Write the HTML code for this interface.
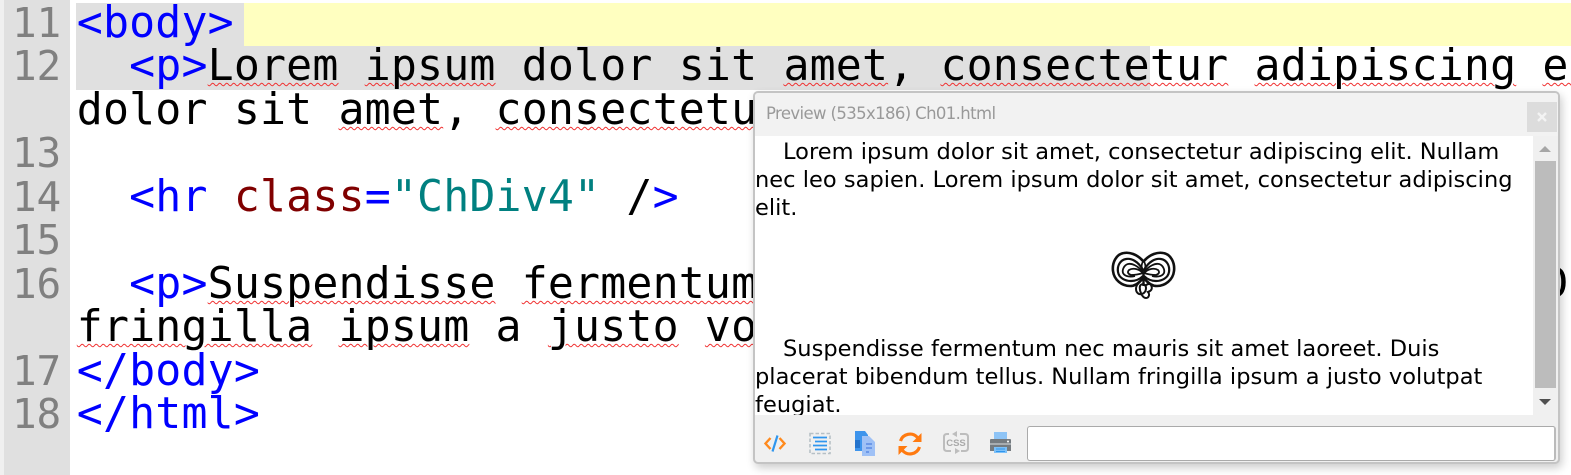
<!DOCTYPE html>
<html><head><meta charset="utf-8">
<style>
html,body{margin:0;padding:0;background:#fff}
#r{position:relative;width:1571px;height:475px;overflow:hidden;background:#fff}
.g{position:absolute}
.l{position:absolute;left:76.8px;font:43.2px/44px "DejaVu Sans Mono",monospace;white-space:pre;color:#000;letter-spacing:.17px}
.n{position:absolute;left:12px;font:41px/44px "DejaVu Sans Mono",monospace;color:#808080;white-space:pre;letter-spacing:-.2px}
.t{color:#00f}.a{color:#800000}.v{color:#008080}
u{text-decoration:underline wavy #f03030 1px;text-underline-offset:2px}
.p{position:absolute;left:755px;font:22.5px/28px "DejaVu Sans",sans-serif;color:#000;white-space:pre;letter-spacing:.03px}
</style></head><body><div id="r">
<div class="g" style="left:0;top:0;width:4px;height:475px;background:#f0f0f0"></div>
<div class="g" style="left:4px;top:0;width:66px;height:475px;background:#e0e0e0"></div>
<div class="g" style="left:76px;top:3px;width:168px;height:43px;background:#e0e0e0"></div>
<div class="g" style="left:244px;top:3px;width:1327px;height:43px;background:#ffffc0"></div>
<div class="g" style="left:76px;top:46px;width:1074px;height:44px;background:#e0e0e0"></div>
<div class="n" style="top:1px">11</div>
<div class="n" style="top:44px">12</div>
<div class="n" style="top:131px">13</div>
<div class="n" style="top:175px">14</div>
<div class="n" style="top:218px">15</div>
<div class="n" style="top:262px">16</div>
<div class="n" style="top:349px">17</div>
<div class="n" style="top:392px">18</div>
<div class="l t" style="top:1px">&lt;body&gt;</div>
<div class="l" style="top:44px">  <span class="t">&lt;p&gt;</span><u>Lorem</u> <u>ipsum</u> dolor sit <u>amet</u>, <u>consectetur</u> <u>adipiscing</u> <u>elit</u>. Nullam</div>
<div class="l" style="top:88px">dolor sit <u>amet</u>, <u>consectetur</u> <u>adipiscing</u> <u>elit</u>.<span class="t">&lt;/p&gt;</span></div>
<div class="l" style="top:175px">  <span class="t">&lt;hr</span> <span class="a">class</span><span class="t">=</span><span class="v">"ChDiv4"</span> <span style="color:#000">/</span><span class="t">&gt;</span></div>
<div class="l" style="top:262px">  <span class="t">&lt;p&gt;</span><u>Suspendisse</u> <u>fermentum</u> nec <u>mauris</u> sit <u>amet</u> <u>laoreet</u>. Duis</div>
<div class="l" style="top:305px"><u>fringilla</u> <u>ipsum</u> a <u>justo</u> <u>volutpat</u></div>
<div class="l t" style="top:349px">&lt;/body&gt;</div>
<div class="l t" style="top:392px">&lt;/html&gt;</div>

<!-- preview window -->
<div class="g" style="left:753px;top:91px;width:807px;height:373px;box-sizing:border-box;background:#f0f0f0;border:2px solid #c4c4c4;border-radius:5px;box-shadow:2px 4px 9px rgba(0,0,0,.2)"></div>
<div class="g" style="left:755px;top:93px;width:803px;height:43px;background:#f2f2f2;border-radius:3px 3px 0 0"></div>
<div class="g" style="left:766px;top:104px;font:16.5px/20px 'DejaVu Sans',sans-serif;color:#999;letter-spacing:-.62px;white-space:pre">Preview (535x186) Ch01.html</div>
<div class="g" style="left:1527px;top:102px;width:30px;height:30px;background:#dcdcdc"></div>
<svg class="g" style="left:1535px;top:110px" width="14" height="14"><path d="M3 3L11 11M11 3L3 11" stroke="#f3f3f3" stroke-width="2.4"/></svg>
<div class="g" style="left:755px;top:136px;width:778px;height:279px;background:#fff;overflow:hidden"></div>
<div class="p" style="top:138px;left:783px">Lorem ipsum dolor sit amet, consectetur adipiscing elit. Nullam</div>
<div class="p" style="top:166px">nec leo sapien. Lorem ipsum dolor sit amet, consectetur adipiscing</div>
<div class="p" style="top:194px">elit.</div>
<div class="p" style="top:335px;left:783px">Suspendisse fermentum nec mauris sit amet laoreet. Duis</div>
<div class="p" style="top:363px">placerat bibendum tellus. Nullam fringilla ipsum a justo volutpat</div>
<div class="g" style="left:755px;top:391px;width:778px;height:24px;overflow:hidden"><div class="p" style="top:0;left:0">feugiat.</div></div>
<!-- ornament -->
<svg class="g" style="left:1105px;top:248px" width="77" height="56" viewBox="0 0 77 56" fill="none" stroke="#111">
<g id="lobe">
<path d="M38 13C32 6 24 4 19 5C11 6 7 15 8 23C9 32 17 38 25 38C31 38 35 34 38 30" stroke-width="2.600"/>
<path d="M38 22C33 13 26 10 21 11C15 12 12 18 13 24C14 30 20 33 26 33C31 33 35 31 38 28" stroke-width="2.200"/>
<path d="M38 24C33 18 27 15 23 16C19 17 17 22 18 25C20 29 26 29 30 28" stroke-width="1.800"/>
<path d="M38 25C33 20 27 20 24 22C22 24 23 26 26 27C30 27 35 26 38 25Z" stroke-width="1.800"/>
</g>
<g transform="matrix(-1 0 0 1 77 0)">
<path d="M38 13C32 6 24 4 19 5C11 6 7 15 8 23C9 32 17 38 25 38C31 38 35 34 38 30" stroke-width="2.600"/>
<path d="M38 22C33 13 26 10 21 11C15 12 12 18 13 24C14 30 20 33 26 33C31 33 35 31 38 28" stroke-width="2.200"/>
<path d="M38 24C33 18 27 15 23 16C19 17 17 22 18 25C20 29 26 29 30 28" stroke-width="1.800"/>
<path d="M38 25C33 20 27 20 24 22C22 24 23 26 26 27C30 27 35 26 38 25Z" stroke-width="1.800"/>
</g>
<path d="M38.500 13C36 16 36 20 38.500 23C41 20 41 16 38.500 13Z" stroke-width="1.600"/>
<path d="M38.500 24V38" stroke-width="2.400"/>
<path d="M34 35C30 38 30 44 34 46C38 47 41 44 41 40C41 36 36 35 35 38C34 42 37 50 41 50C44 50 45 46 43 44C46 43 48 41 46 37C45 35 42 36 40 38" stroke-width="2"/>
</svg>

<!-- scrollbar -->
<div class="g" style="left:1533px;top:136px;width:24px;height:279px;background:#f0f0f0"></div>
<div class="g" style="left:1539px;top:146px;width:0;height:0;border:6px solid transparent;border-top:0;border-bottom:6px solid #a6a6a6"></div>
<div class="g" style="left:1535px;top:161px;width:21px;height:227px;background:#bcbcbc"></div>
<div class="g" style="left:1539px;top:399px;width:0;height:0;border:6px solid transparent;border-bottom:0;border-top:6px solid #505050"></div>

<!-- toolbar -->
<div class="g" style="left:1027px;top:426px;width:529px;height:35px;box-sizing:border-box;background:#fff;border:1px solid #aaa;border-radius:3px;border-right:2px solid #bbb"></div>
<svg class="g" style="left:761px;top:428px" width="260" height="32" viewBox="0 0 260 32" fill="none">
<path d="M9.500 10L4.500 15.500L9.500 21M18.500 10L23.500 15.500L18.500 21" stroke="#ff8a1e" stroke-width="2.400"/>
<path d="M16.500 7.500L11.500 23.500" stroke="#2f96ee" stroke-width="2.200"/>
<rect x="49" y="5.500" width="20" height="20" stroke="#b6c0c6" stroke-width="1.600" stroke-dasharray="3.500 2"/>
<path d="M52 9.500H66M54 13.500H66M52 17.500H66M54 21.500H66" stroke="#2f96ee" stroke-width="1.700"/>
<path d="M94 3h10l3 4v16H94z" fill="#3d94ec"/>
<path d="M94 12h5v8h-5z" fill="#2473cc"/>
<path d="M101 8h7l6 6v14h-13z" fill="#9fc1f6"/>
<path d="M105 16h6M105 20h6M105 24h3" stroke="#6c98e8" stroke-width="2"/>
<path d="M139.500 13A10 10 0 0 1 156.500 9.500M158.500 19A10 10 0 0 1 141.500 22.500" stroke="#ff7a10" stroke-width="3.200"/>
<path d="M160.500 5V14H151.500ZM137.500 27V18H146.500Z" fill="#ff7a10"/>
<path d="M188 6H186Q183 6 183 9V20Q183 23 186 23H190M199 6H204Q207 6 207 9V20Q207 23 204 23H200" stroke="#bdbdbd" stroke-width="2"/>
<path d="M196 3L191 6L196 9ZM194 20L199 23L194 26Z" fill="#bdbdbd"/>
<text x="195" y="18" text-anchor="middle" font-family="'Liberation Sans',sans-serif" font-size="9.500" font-weight="700" fill="#aaa">CSS</text>
<path d="M233 4h13v7h-13z" fill="#8ec4f6"/>
<path d="M230 11h19q1 0 1 1v11h-4v-4h-13v4h-4V12q0-1 1-1z" fill="#757b80"/>
<path d="M229 15h21v2h-21z" fill="#a8adb1"/>
<circle cx="247" cy="13.500" r="1" fill="#fff"/>
<path d="M233 19h13v6h-13z" fill="#7cc0f8"/>
<path d="M235 21h9M235 23.500h9" stroke="#2f96ee" stroke-width="1.100"/>
</svg>
</div></body></html>
